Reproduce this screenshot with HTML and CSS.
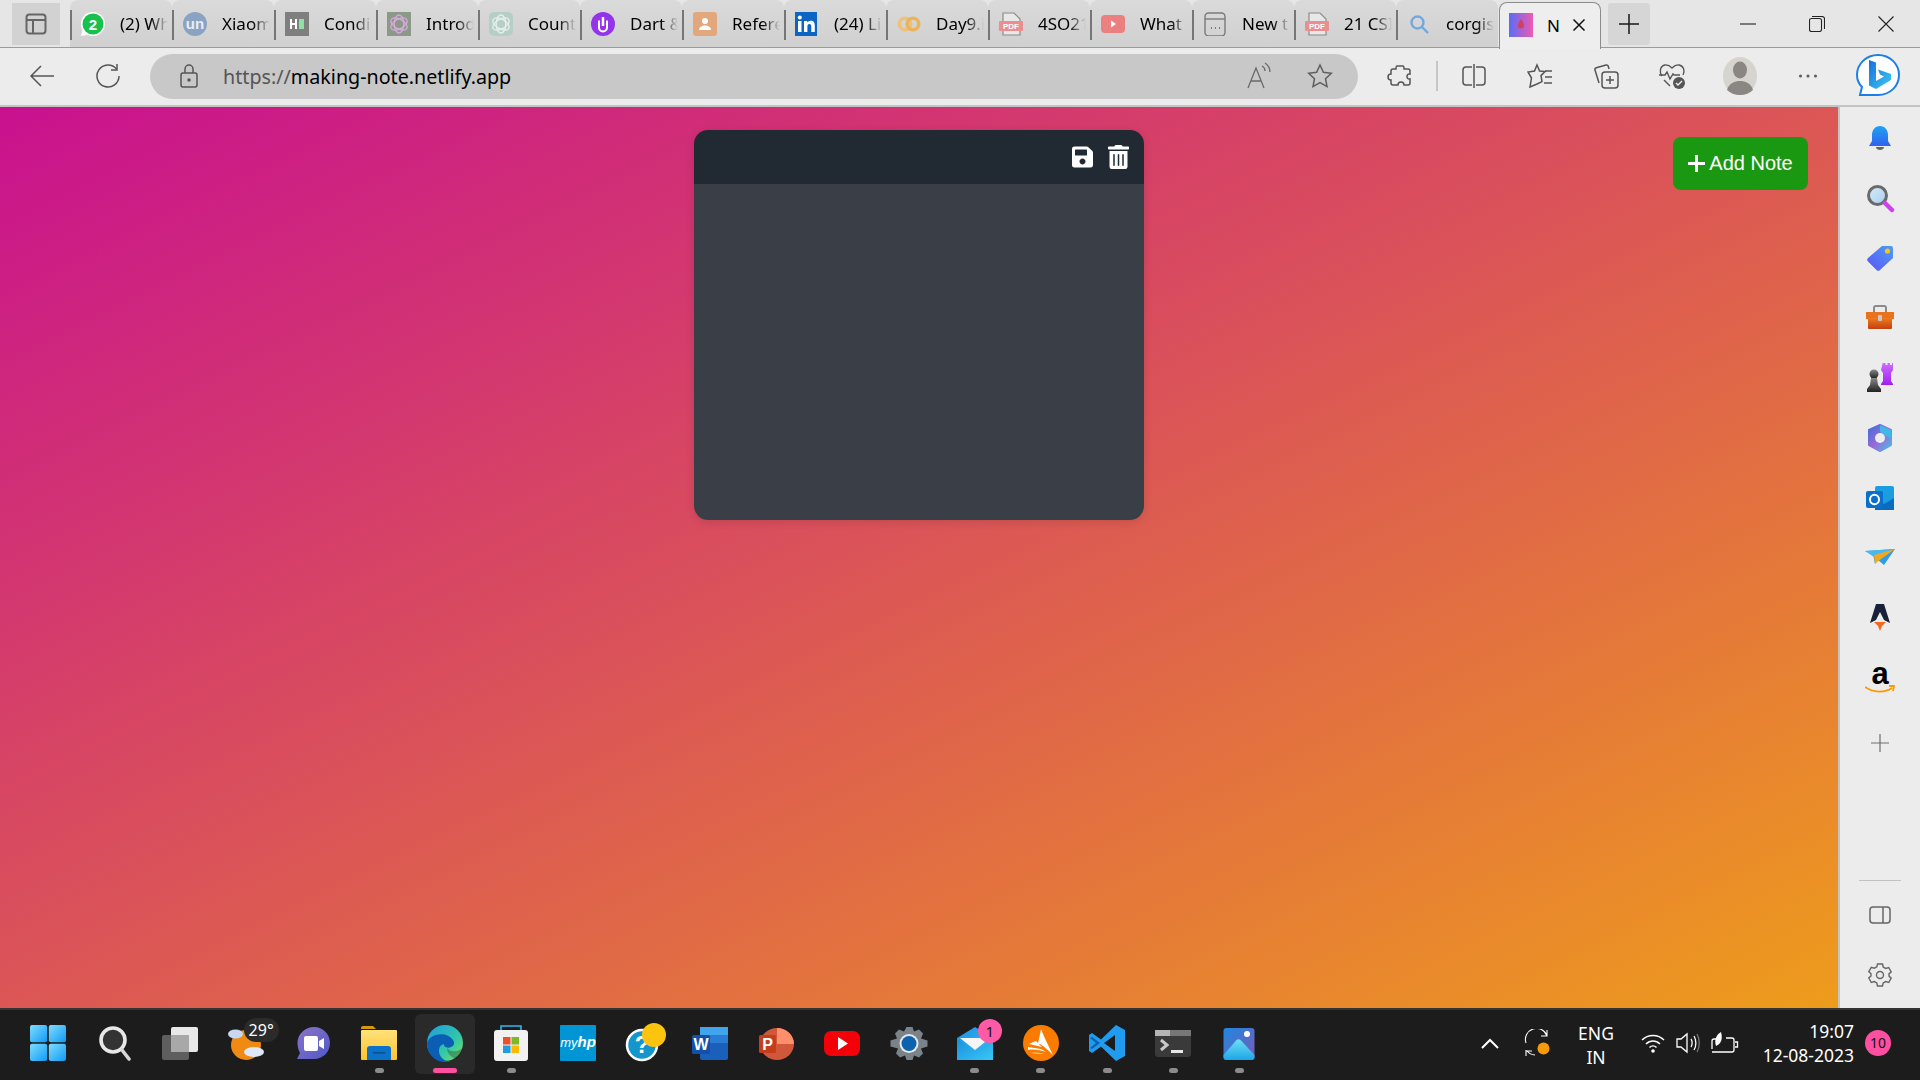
FILE: index.html
```html
<!DOCTYPE html>
<html lang="en">
<head>
<meta charset="utf-8">
<title>Making Note</title>
<link rel="stylesheet" href="styles.css">
</head>
<body>
<svg class="defs" width="0" height="0" aria-hidden="true">
  <defs>
    <linearGradient id="gWin" x1="0" y1="0" x2="1" y2="1"><stop offset="0" stop-color="#7fdcff"/><stop offset="1" stop-color="#0f9bf5"/></linearGradient>
    <linearGradient id="gBell" x1="0" y1="0" x2="0" y2="1"><stop offset="0" stop-color="#1fa2f0"/><stop offset="1" stop-color="#2f62f0"/></linearGradient>
    <linearGradient id="gTag" x1="1" y1="0" x2="0" y2="1"><stop offset="0" stop-color="#4e9cf5"/><stop offset="1" stop-color="#5a55f5"/></linearGradient>
    <linearGradient id="gBox" x1="0" y1="0" x2="0" y2="1"><stop offset="0" stop-color="#f07a1e"/><stop offset="1" stop-color="#c2410f"/></linearGradient>
    <linearGradient id="gLens" x1="0" y1="0" x2="1" y2="1"><stop offset="0" stop-color="#d8ecf8"/><stop offset="1" stop-color="#a5cdf0"/></linearGradient>
    <linearGradient id="gRook" x1="0" y1="0" x2="0" y2="1"><stop offset="0" stop-color="#d070ff"/><stop offset="1" stop-color="#a020f0"/></linearGradient>
    <linearGradient id="gPawn" x1="0" y1="0" x2="0" y2="1"><stop offset="0" stop-color="#888"/><stop offset="1" stop-color="#222"/></linearGradient>
    <linearGradient id="gM365" x1="0" y1="0" x2="1" y2="1"><stop offset="0" stop-color="#3a6fd8"/><stop offset=".5" stop-color="#9a6ad8"/><stop offset="1" stop-color="#45c0e8"/></linearGradient>
    <linearGradient id="gEdge" x1="0" y1="0" x2="1" y2="1"><stop offset="0" stop-color="#1b9de2"/><stop offset=".6" stop-color="#33c6a8"/><stop offset="1" stop-color="#7be35c"/></linearGradient>
    <linearGradient id="gFolder" x1="0" y1="0" x2="0" y2="1"><stop offset="0" stop-color="#ffe27a"/><stop offset="1" stop-color="#fdc22e"/></linearGradient>
    <linearGradient id="gChat" x1="0" y1="0" x2="1" y2="1"><stop offset="0" stop-color="#8c74c8"/><stop offset="1" stop-color="#5058c8"/></linearGradient>
    <linearGradient id="gMail" x1="0" y1="0" x2="1" y2="1"><stop offset="0" stop-color="#1a8ee0"/><stop offset="1" stop-color="#38c8f5"/></linearGradient>
    <linearGradient id="gPhoto" x1="0" y1="0" x2="1" y2="1"><stop offset="0" stop-color="#1e88e0"/><stop offset="1" stop-color="#7a5ab8"/></linearGradient>
    <linearGradient id="gPeak" x1="0" y1="0" x2="0" y2="1"><stop offset="0" stop-color="#6fe0f5"/><stop offset="1" stop-color="#1ea5e8"/></linearGradient>
    <linearGradient id="gTabN" x1="0" y1="0" x2="1" y2="0"><stop offset="0" stop-color="#5a6cf5"/><stop offset="1" stop-color="#f05ab0"/></linearGradient>
    <linearGradient id="gBing" x1="0" y1="0" x2="1" y2="1"><stop offset="0" stop-color="#1670e0"/><stop offset="1" stop-color="#3ec8f0"/></linearGradient>
  </defs>
</svg>

<header class="tabstrip">
  <button class="tab-panel-btn" type="button">
    <svg width="24" height="24" viewBox="0 0 24 24" fill="none" stroke="#666" stroke-width="2"><rect x="2.500" y="2.500" width="19" height="19" rx="3"/><path d="M2.500 8h19M9 8v13.500"/></svg>
  </button>
  <div class="tabs">
    <div class="tab"><svg class="fav" viewBox="0 0 24 24"><path d="M12 0a12 12 0 0 1 0 24c-2 0-3.800-.5-5.400-1.300L0 24l1.500-6A12 12 0 0 1 12 0z" fill="#fff"/><circle cx="12" cy="12" r="10.500" fill="#18c04c"/><text x="12" y="17.500" class="fav-num">2</text></svg><span class="tab-title">(2) Wh</span></div>
    <div class="tab"><svg class="fav" viewBox="0 0 24 24"><circle cx="12" cy="12" r="12" fill="#8ba3c2"/><text x="12" y="17" class="fav-un">un</text></svg><span class="tab-title">Xiaom</span></div>
    <div class="tab"><svg class="fav" viewBox="0 0 24 24"><rect width="24" height="24" fill="#7f7f7f"/><path d="M5 7h2v10H5zM10 7h2v10h-2zM7 11h3v2H7z" fill="#fff"/><rect x="14" y="7" width="5" height="10" fill="#8fe0a8"/></svg><span class="tab-title">Condi</span></div>
    <div class="tab"><svg class="fav" viewBox="0 0 24 24"><rect width="24" height="24" fill="#8b9a86"/><g fill="none" stroke="#d8a8e0" stroke-width="1.300"><ellipse cx="12" cy="12" rx="4.800" ry="9"/><ellipse cx="12" cy="12" rx="4.800" ry="9" transform="rotate(60 12 12)"/><ellipse cx="12" cy="12" rx="4.800" ry="9" transform="rotate(120 12 12)"/></g></svg><span class="tab-title">Introd</span></div>
    <div class="tab"><svg class="fav" viewBox="0 0 24 24"><rect width="24" height="24" rx="5" fill="#b5cfc6"/><g fill="none" stroke="#e6f0ec" stroke-width="1.300"><ellipse cx="12" cy="12" rx="4.800" ry="9"/><ellipse cx="12" cy="12" rx="4.800" ry="9" transform="rotate(60 12 12)"/><ellipse cx="12" cy="12" rx="4.800" ry="9" transform="rotate(120 12 12)"/></g></svg><span class="tab-title">Count</span></div>
    <div class="tab"><svg class="fav" viewBox="0 0 24 24"><circle cx="12" cy="12" r="12" fill="#9333ea"/><path d="M8 8.500v7a4 4 0 0 0 8 0v-7" fill="none" stroke="#fff" stroke-width="2"/><path d="M12 5v9" stroke="#fff" stroke-width="2.500"/></svg><span class="tab-title">Dart &amp;</span></div>
    <div class="tab"><svg class="fav" viewBox="0 0 24 24"><rect width="24" height="24" rx="3" fill="#e2a87c"/><circle cx="12" cy="9" r="3" fill="#fff"/><path d="M6 18c0-3 3-4.500 6-4.500s6 1.500 6 4.500z" fill="#fff"/></svg><span class="tab-title">Refere</span></div>
    <div class="tab"><svg class="fav" viewBox="0 0 24 24"><rect y="-1" width="22" height="26" rx="2" fill="#0a66c2"/><rect x="3" y="9" width="3.500" height="11" fill="#fff"/><circle cx="4.800" cy="5.500" r="2" fill="#fff"/><path d="M9 9h3.300v1.600c.7-1.100 1.900-1.900 3.500-1.900 3 0 4 2 4 5V20h-3.500v-5.500c0-1.500-.5-2.600-1.900-2.600s-2 1.100-2 2.600V20H9z" fill="#fff"/></svg><span class="tab-title">(24) Li</span></div>
    <div class="tab"><svg class="fav" viewBox="0 0 24 24" fill="none" stroke-width="3.600"><circle cx="8" cy="12" r="5.800" stroke="#efc27c"/><circle cx="16" cy="12" r="5.800" stroke="#e8b45c"/></svg><span class="tab-title">Day9.i</span></div>
    <div class="tab"><svg class="fav" viewBox="0 0 24 24"><path d="M4 1h11l6 6v16H4z" fill="#e8e8e8" stroke="#8a8a8a" stroke-width="1.200"/><rect y="9" width="24" height="10" rx="1" fill="#ea8f8f"/><text x="12" y="17" class="fav-pdf">PDF</text></svg><span class="tab-title">4SO21</span></div>
    <div class="tab"><svg class="fav" viewBox="0 0 24 24"><rect y="3" width="24" height="18" rx="4" fill="#ea8080"/><path d="M10 8.500l5 3.500-5 3.500z" fill="#fff"/></svg><span class="tab-title">What</span></div>
    <div class="tab"><svg class="fav" viewBox="0 0 24 24" fill="none" stroke="#7a7a7a" stroke-width="1.400"><rect x="2" y="1" width="20" height="23" rx="3.500"/><path d="M2 7h20"/><path d="M8 16h1M12 16h1M16 16h1" stroke-width="1.800"/></svg><span class="tab-title">New t</span></div>
    <div class="tab"><svg class="fav" viewBox="0 0 24 24"><path d="M4 1h11l6 6v16H4z" fill="#e8e8e8" stroke="#8a8a8a" stroke-width="1.200"/><rect y="9" width="24" height="10" rx="1" fill="#ea8f8f"/><text x="12" y="17" class="fav-pdf">PDF</text></svg><span class="tab-title">21 CSI</span></div>
    <div class="tab"><svg class="fav" viewBox="0 0 24 24" fill="none" stroke="#74a8dc" stroke-width="2.400"><circle cx="10.500" cy="10.500" r="6"/><path d="M15 15l6 6"/></svg><span class="tab-title">corgis</span></div>
    <div class="tab tab-active"><svg class="fav" viewBox="0 0 24 24"><rect width="24" height="24" fill="url(#gTabN)"/><path d="M12 6c2 3 3 4.500 3 6.500a3 3 0 0 1-6 0C9 10.500 10 9 12 6z" fill="#d04060"/></svg><span class="tab-title">N</span><svg class="tab-close" width="14" height="14" viewBox="0 0 14 14" stroke="#111" stroke-width="1.500"><path d="M1.500 1.500l11 11M12.500 1.500l-11 11"/></svg></div>
  </div>
  <button class="new-tab" type="button"><svg width="22" height="22" viewBox="0 0 22 22" stroke="#1a1a1a" stroke-width="1.500"><path d="M11 1v20M1 11h20"/></svg></button>
  <div class="winctl">
    <span class="winbtn"><svg width="16" height="16" viewBox="0 0 16 16" stroke="#222" stroke-width="1.100"><path d="M0 8h16"/></svg></span>
    <span class="winbtn"><svg width="16" height="16" viewBox="0 0 16 16" fill="none" stroke="#222" stroke-width="1.100"><rect x=".5" y="2.500" width="12" height="13" rx="2"/><path d="M3 .5h10a2.500 2.500 0 0 1 2.500 2.500v10"/></svg></span>
    <span class="winbtn"><svg width="16" height="16" viewBox="0 0 16 16" stroke="#222" stroke-width="1.100"><path d="M.5.500l15 15M15.500.500l-15 15"/></svg></span>
  </div>
</header>

<nav class="toolbar">
  <span class="slot"><svg width="26" height="26" viewBox="0 0 26 26" fill="none" stroke="#555" stroke-width="1.500"><path d="M25 13H2M12 3L2 13l10 10"/></svg></span>
  <span class="slot"><svg width="26" height="26" viewBox="0 0 26 26" fill="none" stroke="#555" stroke-width="1.500"><path d="M21.500 6A11 11 0 1 0 24 13"/><path d="M22 1v6h-6"/></svg></span>
  <div class="address">
    <svg class="lock" width="20" height="24" viewBox="0 0 20 24" fill="none" stroke="#555" stroke-width="1.500"><rect x="2" y="9" width="16" height="14" rx="2"/><path d="M6 9V5a4 4 0 0 1 8 0v4"/><circle cx="10" cy="16" r="1" fill="#555"/></svg>
    <span class="url"><span class="url-scheme">https://</span>making-note.netlify.app</span>
    <svg class="read" width="28" height="28" viewBox="0 0 28 28" fill="none" stroke="#6a6a6a" stroke-width="1.300"><path d="M2 26L10 6l8 20M5 19h10"/><path d="M16 4c2 1 3 3 3 5M19 1c3 2 5 5 5 9"/></svg>
    <svg class="star" width="26" height="26" viewBox="0 0 26 26" fill="none" stroke="#5f5f5f" stroke-width="1.500"><path d="M13 2l3.400 7.300 7.900 1-5.800 5.400 1.500 7.900L13 19.700l-7 3.900 1.500-7.900-5.800-5.400 7.900-1z"/></svg>
  </div>
  <span class="slot slot-after"><svg width="26" height="26" viewBox="0 0 26 26" fill="none" stroke="#555" stroke-width="1.500"><path d="M10 3h6c1 0 1 2 1 3h4c1 0 2 1 2 2v3c-4-1-4 6 0 5v4c0 1-1 2-2 2h-4c0-4-6-4-6 0H6c-1 0-2-1-2-2v-3c-4 0-4-6 0-6V8c0-1 1-2 2-2h3c0-1 0-3 1-3z"/></svg></span>
  <span class="tool-sep"></span>
  <span class="slot"><svg width="26" height="26" viewBox="0 0 26 26" fill="none" stroke="#555" stroke-width="1.500"><path d="M11 4H5a3 3 0 0 0-3 3v12a3 3 0 0 0 3 3h6M15 4h6a3 3 0 0 1 3 3v12a3 3 0 0 1-3 3h-6M13 1v24"/></svg></span>
  <span class="slot"><svg width="26" height="26" viewBox="0 0 26 26" fill="none" stroke="#555" stroke-width="1.500"><path d="M10 2l2.600 6 5.400.6-4 4 1 6L10 21l-7 3 1.500-9L1 9l6.500-1z"/><path d="M18 8h7M18 14h7M17 20h8"/></svg></span>
  <span class="slot"><svg width="26" height="26" viewBox="0 0 26 26" fill="none" stroke="#555" stroke-width="1.500"><path d="M6 20L2 7c-.3-1 .3-2 1.300-2.300L13 2c1-.2 2 .3 2.300 1.300L16 6"/><rect x="9" y="9" width="16" height="16" rx="3"/><path d="M17 13v8M13 17h8"/></svg></span>
  <span class="slot"><svg width="28" height="28" viewBox="0 0 28 28" fill="none" stroke="#555" stroke-width="1.400"><path d="M4 14C1 10 2 4 7 3c3-.5 5 1 7 3 2-2 4-3.500 7-3 5 1 6 6 4 10"/><path d="M1 13h6l2-3 3 7 3-5 1 1h6"/><path d="M6 18l6 6"/><circle cx="21" cy="21" r="6" fill="#555" stroke="none"/><path d="M18 21l2 2 4-4" stroke="#eee"/></svg></span>
  <span class="slot slot-p"><span class="avatar"><svg width="34" height="38" viewBox="0 0 34 38"><ellipse cx="17" cy="19" rx="17" ry="19" fill="#d6d4cf"/><ellipse cx="17" cy="13" rx="7" ry="8.500" fill="#8a8681"/><path d="M4 33c2-7 8-9 13-9s11 2 13 9c-3 3-8 5-13 5S7 36 4 33z" fill="#8a8681"/></svg></span></span>
  <span class="slot slot-p"><svg width="20" height="6" viewBox="0 0 20 6" fill="#5a5a5a"><circle cx="2.500" cy="3" r="1.500"/><circle cx="10" cy="3" r="1.500"/><circle cx="17.500" cy="3" r="1.500"/></svg></span>
  <span class="slot slot-b"><svg width="46" height="46" viewBox="0 0 46 46"><path d="M23 2c12 0 21 9 21 20s-9 20-21 20H5l2-8C4 31 2 27 2 22 2 11 11 2 23 2z" fill="#fff" stroke="#1c7fe8" stroke-width="2"/><path d="M14 7l7 2.500V28l8-4.500-4-2-2-5 13 4.500v6l-15 9-7-3.500z" fill="url(#gBing)"/></svg></span>
</nav>

<div class="workspace">
  <main class="page">
    <article class="note">
      <div class="note-head">
        <svg class="note-icon" width="21" height="24" viewBox="0 0 448 512" fill="#fff"><path d="M433.941 129.941l-83.882-83.882A48 48 0 0 0 316.118 32H48C21.490 32 0 53.490 0 80v352c0 26.510 21.490 48 48 48h352c26.510 0 48-21.490 48-48V163.882a48 48 0 0 0-14.059-33.941zM224 416c-35.346 0-64-28.654-64-64 0-35.346 28.654-64 64-64s64 28.654 64 64c0 35.346-28.654 64-64 64zm96-304.520V212c0 6.627-5.373 12-12 12H76c-6.627 0-12-5.373-12-12V108c0-6.627 5.373-12 12-12h228.520c3.183 0 6.235 1.264 8.485 3.515l3.480 3.480A11.996 11.996 0 0 1 320 111.480z"/></svg>
        <svg class="note-icon" width="21" height="24" viewBox="0 0 448 512" fill="#fff"><path d="M32 464a48 48 0 0 0 48 48h288a48 48 0 0 0 48-48V128H32zm272-256a16 16 0 0 1 32 0v224a16 16 0 0 1-32 0zm-96 0a16 16 0 0 1 32 0v224a16 16 0 0 1-32 0zm-96 0a16 16 0 0 1 32 0v224a16 16 0 0 1-32 0zM432 32H312l-9.400-18.700A24 24 0 0 0 281.100 0H166.800a23.720 23.720 0 0 0-21.400 13.300L136 32H16A16 16 0 0 0 0 48v32a16 16 0 0 0 16 16h416a16 16 0 0 0 16-16V48a16 16 0 0 0-16-16z"/></svg>
      </div>
      <div class="note-body"></div>
    </article>
    <button class="add-note" type="button"><svg width="17" height="17" viewBox="0 0 17 17" fill="#fff"><path d="M7 0h3v7h7v3h-7v7H7v-7H0V7h7z"/></svg>Add Note</button>
  </main>

  <aside class="sidebar">
    <span class="side-item"><svg width="30" height="30" viewBox="0 0 30 30"><path d="M15 3c5 0 8 4 8 9v6l3 5H4l3-5v-6c0-5 3-9 8-9z" fill="url(#gBell)"/><path d="M11 24h8c0 2-2 3-4 3s-4-1-4-3z" fill="#666"/></svg></span>
    <span class="side-item"><svg width="30" height="30" viewBox="0 0 30 30"><circle cx="12.500" cy="12.500" r="9" fill="url(#gLens)" stroke="#6a6a6a" stroke-width="3"/><path d="M20 20l7 7" stroke="#d040f0" stroke-width="4.500" stroke-linecap="round"/></svg></span>
    <span class="side-item"><svg width="30" height="30" viewBox="0 0 30 30"><path d="M17 3h9a2 2 0 0 1 2 2v10L15 27a2.500 2.500 0 0 1-3.500 0L3 18.500a2.500 2.500 0 0 1 0-3.500z" fill="url(#gTag)"/><circle cx="22.500" cy="8" r="2.600" fill="#f5c518"/></svg></span>
    <span class="side-item"><svg width="30" height="30" viewBox="0 0 30 30"><path d="M9 9V5a2 2 0 0 1 2-2h8a2 2 0 0 1 2 2v4" fill="none" stroke="#8a8a8a" stroke-width="2"/><path d="M1 9h28v7H1z" fill="#e8721e"/><path d="M3 15h24v10a1 1 0 0 1-1 1H4a1 1 0 0 1-1-1z" fill="url(#gBox)"/><rect x="13" y="12" width="4" height="6" rx="1" fill="#c8c8c8"/></svg></span>
    <span class="side-item"><svg width="30" height="30" viewBox="0 0 30 30"><path d="M19 0h2.500v3h2V0H26v3h2V0h1v8l-2 3v8l2 3v1H17v-1l2-3v-8l-2-3z" fill="url(#gRook)" transform="translate(-1 -1)"/><circle cx="9" cy="11" r="4.500" fill="url(#gPawn)"/><path d="M6 15h6l1 7 3 4v3H2v-3l3-4z" fill="url(#gPawn)"/></svg></span>
    <span class="side-item"><svg width="30" height="30" viewBox="0 0 30 30"><path d="M15 2l11 5v15l-11 6-11-6V7z" fill="url(#gM365)" stroke="url(#gM365)" stroke-width="2" stroke-linejoin="round"/><path d="M15 2l11 5v8l-7-3-4-3z" fill="#3fb8e8"/><circle cx="15" cy="15" r="5" fill="#ededed"/></svg></span>
    <span class="side-item"><svg width="30" height="30" viewBox="0 0 30 30"><rect x="10" y="3" width="19" height="24" rx="2" fill="#1b9de2"/><path d="M10 15l9 6 10-6v12H10z" fill="#0a6cc0"/><rect x="1" y="8" width="17" height="17" rx="2" fill="#0a70cc"/><ellipse cx="9.500" cy="16.500" rx="4.500" ry="4.800" fill="none" stroke="#fff" stroke-width="2"/></svg></span>
    <span class="side-item"><svg width="30" height="30" viewBox="0 0 30 30"><path d="M0 8l30-2-11 16-6-5-3 4-2-10z" fill="#2f9ce8"/><path d="M0 8l30-2L9 14z" fill="#48b8f0"/><path d="M9 12L30 6 12 19l-2 2z" fill="#f0a820"/></svg></span>
    <span class="side-item"><svg width="30" height="30" viewBox="0 0 30 30"><path d="M11 1h8l6 19-6-3-4-8-4 8-6 3z" fill="#17223a"/><path d="M9 19h12l-4 4-2 5-2-5z" fill="#f26a1a"/></svg></span>
    <span class="side-item"><span class="amazon"><span class="amazon-a">a</span><svg class="amazon-smile" width="30" height="9" viewBox="0 0 30 9" fill="none" stroke="#f90" stroke-width="1.800"><path d="M0 2c8 6 20 6 27 1"/><path d="M24 1h5l-1 5"/></svg></span></span>
    <span class="side-item side-add"><svg width="20" height="20" viewBox="0 0 20 20" stroke="#6e6e6e" stroke-width="1.200"><path d="M10 1v18M1 10h18"/></svg></span>
    <div class="side-bottom">
      <span class="side-rule"></span>
      <span class="side-item"><svg width="22" height="18" viewBox="0 0 22 18" fill="none" stroke="#666" stroke-width="1.500"><rect x="1" y="1" width="20" height="16" rx="3"/><path d="M14 1v16"/></svg></span>
      <span class="side-item"><svg width="26" height="26" viewBox="0 0 26 26" fill="none" stroke="#666" stroke-width="1.400"><circle cx="13" cy="13" r="3.500"/><path d="M10.500 2h5l.7 3 2.500 1.400 3-.9 2.500 4.300-2.200 2.100v2.200l2.200 2.100-2.500 4.300-3-.9-2.500 1.400-.7 3h-5l-.7-3-2.500-1.400-3 .9L1.800 16l2.200-2.100v-2.200L1.800 9.600l2.500-4.300 3 .9L9.800 4.800z"/></svg></span>
    </div>
  </aside>
</div>

<footer class="taskbar">
  <div class="apps">
    <div class="app"><svg viewBox="0 0 36 36"><rect width="17.200" height="17.200" rx="2" fill="url(#gWin)"/><rect x="18.800" width="17.200" height="17.200" rx="2" fill="url(#gWin)"/><rect y="18.800" width="17.200" height="17.200" rx="2" fill="url(#gWin)"/><rect x="18.800" y="18.800" width="17.200" height="17.200" rx="2" fill="url(#gWin)"/></svg></div>
    <div class="app"><svg viewBox="0 0 36 36" fill="none"><circle cx="17" cy="15" r="12" fill="#333" stroke="#e8e8e8" stroke-width="3.600"/><path d="M26 25l7 9" stroke="#d8d8d8" stroke-width="3.600" stroke-linecap="round"/></svg></div>
    <div class="app"><svg viewBox="0 0 36 36"><rect x="0" y="10" width="27" height="25" rx="2" fill="#5e5e5e"/><rect x="9" y="2" width="27" height="25" rx="2" fill="#e8e8e8"/><rect x="9" y="10" width="18" height="17" fill="#a8a8a8"/></svg></div>
    <div class="app app-weather"><svg viewBox="0 0 36 36"><circle cx="17" cy="20" r="15" fill="#f08a12"/><ellipse cx="6.500" cy="9" rx="7.500" ry="4.500" fill="#c8d8f0"/><ellipse cx="25" cy="27" rx="10" ry="5" fill="#dfe8f8"/></svg><span class="temp">29°</span></div>
    <div class="app"><svg viewBox="0 0 36 36"><path d="M19 2c9 0 16 7 16 16s-7 16-16 16H2l3-6c-1.500-3-2.500-6-2.500-10C2.500 9 10 2 19 2z" fill="url(#gChat)"/><rect x="9" y="11" width="14" height="15" rx="2" fill="#fff"/><path d="M24 16l5-3v11l-5-3z" fill="#fff"/></svg></div>
    <div class="app app-dot"><svg viewBox="0 0 36 36"><path d="M0 2a2 2 0 0 1 2-2h10l3 3h-15z" fill="#d59a0c" transform="translate(0 1)"/><rect y="5" width="36" height="30" rx="1" fill="url(#gFolder)"/><path d="M6 24a3 3 0 0 1 3-3h18a3 3 0 0 1 3 3v11H6z" fill="#0a72c8"/><rect x="12" y="27" width="12" height="1.600" fill="#0a4f90"/></svg></div>
    <div class="app app-active"><svg viewBox="0 0 36 36"><circle cx="18" cy="18" r="18" fill="url(#gEdge)"/><path d="M0 18C3 8 20 6 26 15c2 3 1 6-2 7-4 2-8-1-7-3-6 1-7 10-1 15 2 2 5 2 8 2A18 18 0 0 1 0 18z" fill="#0a5fb4"/><path d="M36 22c-2 3-6 5-11 4-2 0-4-2-5-3 0 6 5 11 10 10 3-2 5-6 6-11z" fill="#1c1c1c" opacity=".3"/></svg></div>
    <div class="app app-dot"><svg viewBox="0 0 36 36"><path d="M8 5V1h20v4" fill="none" stroke="#2db6f5" stroke-width="1.600"/><rect x="1" y="5" width="34" height="31" rx="3" fill="#f2f2f2"/><rect x="10" y="12" width="7.500" height="7.500" fill="#e8512a"/><rect x="18.500" y="12" width="7.500" height="7.500" fill="#7db828"/><rect x="10" y="20.500" width="7.500" height="7.500" fill="#1c9ee0"/><rect x="18.500" y="20.500" width="7.500" height="7.500" fill="#fdb900"/></svg></div>
    <div class="app"><svg viewBox="0 0 36 36"><rect width="36" height="36" rx="1" fill="#0096d6"/><text x="18" y="22" class="myhp">my<tspan class="myhp-b">hp</tspan></text></svg></div>
    <div class="app"><svg viewBox="0 0 36 36"><circle cx="16" cy="20" r="15" fill="#1296cc" stroke="#fff" stroke-width="2.500"/><text x="16" y="28" class="help-q">?</text><circle cx="28" cy="10" r="12" fill="#fcc30f"/></svg></div>
    <div class="app"><svg viewBox="0 0 36 36"><rect x="8" y="2" width="28" height="33" rx="2" fill="#1a5fbc"/><rect x="8" y="2" width="28" height="8" fill="#41a5ee"/><rect x="8" y="10" width="28" height="8" fill="#2b7cd3"/><rect x="0" y="10" width="18" height="19" rx="1.500" fill="#1450a8"/><text x="9" y="25" class="office-l">W</text></svg></div>
    <div class="app"><svg viewBox="0 0 36 36"><ellipse cx="19" cy="19" rx="17" ry="16" fill="#d0573a"/><path d="M19 3a17 16 0 0 1 17 16H19z" fill="#ff8f6b"/><rect x="1" y="10" width="17" height="18" rx="1.500" fill="#c43e1c"/><text x="9.500" y="25" class="office-l">P</text></svg></div>
    <div class="app"><svg viewBox="0 0 36 36"><rect y="6" width="36" height="25" rx="7" fill="#f40009"/><path d="M14 12l10 6.500L14 25z" fill="#fff"/></svg></div>
    <div class="app"><svg viewBox="0 0 36 36"><path d="M15 2h6l1.500 4.500 5-2 4 4-2 5 6.500 2v6l-6.500 2 2 5-4 4-5-2L21 35h-6l-1.500-4.500-5 2-4-4 2-5L-1 21.500v-6l6.500-2-2-5 4-4 5 2z" fill="#7a828a" transform="translate(.5 0)"/><circle cx="18" cy="18.500" r="9.500" fill="#e8e8e8"/><circle cx="18" cy="18.500" r="7.500" fill="#0d62b0"/></svg></div>
    <div class="app app-dot app-badged"><svg viewBox="0 0 36 36"><path d="M0 13L18 2l18 11v22H0z" fill="url(#gMail)"/><path d="M3 13h30l-15 12z" fill="#f5f5f5"/><path d="M0 14l18 12 18-12v21H0z" fill="url(#gMail)"/></svg><span class="count-1">1</span></div>
    <div class="app app-dot"><svg viewBox="0 0 36 36"><ellipse cx="18" cy="18" rx="18" ry="18" fill="#f97c00"/><path d="M18 4c3 8 7 16 12 26-5-5-10-10-15-12 1-4 2-9 3-14zM13 16c-3 1-5 2-7 3l13 3zM5 22l13 2 5 3c-6-2-12-3-18-2zM8 28c5-.5 9 0 13 1z" fill="#fff"/></svg></div>
    <div class="app app-dot"><svg viewBox="0 0 36 36"><path d="M26 0l9 5v26l-9 5-15-14.500L2 28l-3-2v-16l3-2 9 6.500z" fill="#1f9cf0" transform="translate(1 0)"/><path d="M26 10L15 18l11 8z" fill="#1c1c1c"/><path d="M11 18L3 12l-2 1 6 5-6 5 2 1z" fill="#0a62b0"/></svg></div>
    <div class="app app-dot"><svg viewBox="0 0 36 36"><rect y="5" width="36" height="27" rx="3" fill="#3a3a3a"/><rect y="5" width="15" height="6" fill="#b5b5b5"/><rect x="15" y="5" width="21" height="6" fill="#777"/><path d="M6 15l6 5-6 5" fill="none" stroke="#c8c8c8" stroke-width="3"/><rect x="16" y="25" width="12" height="3" fill="#e8e8e8"/></svg></div>
    <div class="app app-dot"><svg viewBox="0 0 36 36"><rect x="2.500" y="3" width="31" height="32" rx="3" fill="url(#gPhoto)"/><circle cx="26" cy="9" r="3" fill="#fff"/><path d="M2.500 30l13-15c1-1 3-1 4 0l14 15v2a3 3 0 0 1-3 3h-25a3 3 0 0 1-3-3z" fill="url(#gPeak)"/></svg></div>
  </div>
  <div class="tray">
    <svg class="t-chev" width="18" height="11" viewBox="0 0 18 11" fill="none" stroke="#fff" stroke-width="2"><path d="M1 10l8-8 8 8"/></svg>
    <span class="t-sync"><svg width="28" height="28" viewBox="0 0 28 28" fill="none" stroke="#fff" stroke-width="1.100"><path d="M2 14A11 11 0 0 1 23 7M23 1v6h-6M2 22h6M2 21v6M3 22a11 11 0 0 0 8 4"/><circle cx="19.500" cy="19.500" r="6" fill="#f59a0c" stroke="none"/></svg></span>
    <div class="t-lang"><span>ENG</span><span>IN</span></div>
    <svg class="t-wifi" width="24" height="20" viewBox="0 0 24 20" fill="none" stroke="#fff" stroke-width="1.500"><path d="M1 7c6-6 16-6 22 0M5 11c4-4 10-4 14 0M8.500 14.500c2-2 5-2 7 0"/><circle cx="12" cy="18" r="1.800" fill="#fff" stroke="none"/></svg>
    <svg class="t-vol" width="24" height="22" viewBox="0 0 24 22" fill="none" stroke="#fff" stroke-width="1.300"><path d="M1 7h4l6-5v18l-6-5H1z"/><path d="M15 7c1.500 2 1.500 6 0 8M18 4c2.500 4 2.500 10 0 14"/><path d="M21 2c3 5 3 13 0 18" stroke="#777"/></svg>
    <svg class="t-bat" width="28" height="24" viewBox="0 0 28 24" fill="none" stroke="#fff" stroke-width="1.300"><path d="M7 8H3a2 2 0 0 0-2 2v8M1 21h20a2 2 0 0 0 2-2V9a2 2 0 0 0-2-2h-6"/><path d="M24 11h2.500v5H24"/><path d="M10 1c-5 3-7 8-5 14 5-2 7-7 5-14z" fill="#fff" stroke="none"/></svg>
    <div class="t-clock"><span>19:07</span><span>12-08-2023</span></div>
    <span class="t-badge">10</span>
  </div>
</footer>
</body>
</html>
```

FILE: styles.css
```css
* { box-sizing: border-box; }
html, body { margin: 0; padding: 0; }
body {
  width: 1920px;
  height: 1080px;
  overflow: hidden;
  display: flex;
  flex-direction: column;
  font-family: "Noto Sans", "Open Sans", sans-serif;
  background: #ececec;
}
button { border: 0; padding: 0; font: inherit; }
.defs { position: absolute; }

/* tab strip */
.tabstrip {
  height: 48px;
  display: flex;
  align-items: flex-start;
  background: #e6e6e6;
  border-bottom: 1px solid #9b9b9b;
  flex: none;
}
.tab-panel-btn {
  width: 48px; height: 42px;
  margin: 3px 10px 0 12px;
  background: #d2d2d2;
  display: flex; align-items: center; justify-content: center;
}
.tabs { display: flex; height: 47px; }
.tab {
  position: relative;
  width: 102px; height: 47px;
  display: flex; align-items: center;
  padding-left: 11px;
  background: linear-gradient(#dadada, #d0d0d0);
  border-radius: 8px 8px 0 0;
  color: #000;
  font-size: 17px;
}
.tab::before {
  content: "";
  position: absolute; left: 0; top: 10px;
  width: 2px; height: 30px;
  background: #767676;
}
.tab-active::before { display: none; }
.fav { width: 24px; height: 24px; flex: none; }
.fav-num { font: 700 15px "Liberation Sans", sans-serif; fill: #fff; text-anchor: middle; }
.fav-un { font: 700 15px "Liberation Sans", sans-serif; fill: #e8eef6; text-anchor: middle; }
.fav-pdf { font: 700 8px "Liberation Sans", sans-serif; fill: #fff; text-anchor: middle; }
.tab-title {
  margin-left: 15px;
  width: 51px;
  white-space: nowrap;
  overflow: hidden;
  -webkit-mask-image: linear-gradient(to right, #000 60%, transparent 94%);
  mask-image: linear-gradient(to right, #000 60%, transparent 94%);
}
.tab-active {
  margin-left: 1px;
  width: 102px; height: 47px;
  margin-top: 2px;
  padding: 0 0 2px 9px;
  background: #eeeeee;
  border: 1px solid #8c8c8c;
  border-bottom: 0;
  border-radius: 8px 8px 0 0;
  z-index: 1;
}
.tab-active .tab-title { margin-left: 14px; width: 13px; -webkit-mask-image: none; mask-image: none; }
.tab-close { margin-left: 12px; flex: none; }
.new-tab {
  width: 42px; height: 42px;
  margin: 3px 0 0 7px;
  background: #d6d6d6;
  border-radius: 3px;
  display: flex; align-items: center; justify-content: center;
}
.winctl { margin-left: auto; display: flex; height: 47px; }
.winbtn { width: 69px; display: flex; align-items: center; justify-content: center; }

/* toolbar */
.toolbar {
  height: 59px;
  flex: none;
  display: flex;
  align-items: center;
  padding: 0 0 1px 9px;
  background: #ececec;
  border-bottom: 2px solid #c4c4c4;
}
.slot { width: 66px; height: 46px; display: flex; align-items: center; justify-content: center; flex: none; }
.slot-after { margin-left: 9px; }
.slot-p { margin-left: 2px; }
.slot-b { margin-left: 4px; }
.avatar { display: flex; }
.address {
  width: 1208px; height: 45px;
  margin-left: 9px;
  display: flex; align-items: center;
  padding: 0 25px 0 29px;
  background: #c8c8c8;
  border-radius: 23px;
  flex: none;
}
.url { margin-left: 24px; font-size: 19.700px; color: #000; white-space: nowrap; }
.url-scheme { color: #555; }
.read { margin-left: auto; }
.star { margin-left: 33px; }
.tool-sep { width: 2px; height: 30px; margin: 0 3px; background: #c6c6c6; flex: none; }

/* page */
.workspace { flex: 1; min-height: 0; display: flex; }
.page {
  flex: 1;
  display: grid;
  grid-template-columns: 1fr 450px 1fr;
  align-items: start;
  padding-top: 23px;
  background: linear-gradient(to bottom right, #c9118f, #ee9c1c);
}
.note {
  grid-column: 2;
  height: 390px;
  border-radius: 14px;
  overflow: hidden;
  display: flex; flex-direction: column;
  box-shadow: 0 2px 10px rgba(0, 0, 0, .12);
}
.note-head {
  height: 54px;
  display: flex; align-items: center; justify-content: flex-end;
  gap: 15px;
  padding-right: 15px;
  background: #212932;
}
.note-body { flex: 1; background: #3a3f47; }
.add-note {
  grid-column: 3;
  justify-self: end;
  margin: 7px 30px 0 0;
  width: 135px; height: 53px;
  display: flex; align-items: center; justify-content: center; gap: 4px;
  background: #1a9812;
  color: #fff;
  border-radius: 8px;
  font: 20px "Liberation Sans", sans-serif;
}

/* edge sidebar */
.sidebar {
  width: 82px;
  flex: none;
  display: flex; flex-direction: column; align-items: center;
  padding-top: 1px;
  background: #ececec;
  border-left: 2px solid #c4c4c4;
}
.side-item { height: 60px; flex: none; display: flex; align-items: center; justify-content: center; width: 100%; }
.side-add { margin-top: 5px; }
.side-bottom { margin-top: auto; width: 100%; display: flex; flex-direction: column; align-items: center; padding-bottom: 3px; }
.side-rule { width: 42px; height: 1px; background: #c2c2c2; margin-bottom: 4px; }
.amazon { display: flex; flex-direction: column; align-items: center; }
.amazon-a { font: 700 31px/22px "Liberation Sans", sans-serif; color: #000; }
.amazon-smile { display: block; }

/* taskbar */
.taskbar {
  height: 72px;
  flex: none;
  display: flex;
  background: #1c1c1c;
  border-top: 2px solid #333;
  color: #fff;
}
.apps { display: flex; padding-left: 15px; align-items: flex-start; }
.app {
  position: relative;
  width: 60px; height: 60px;
  margin: 4px 3.100px 0;
  padding-top: 11px;
  display: flex; flex-direction: column; align-items: center;
  border-radius: 6px;
  flex: none;
}
.app svg { width: 36px; height: 36px; flex: none; overflow: visible; }
.app-dot::after, .app-active::after {
  content: "";
  width: 9px; height: 5px;
  margin-top: 7px;
  border-radius: 3px;
  background: #8b8b8b;
}
.app-active { background: #2a2a2a; }
.app-active::after { width: 24px; background: #ff4fa0; }
.temp {
  position: absolute; left: 27px; top: 4px;
  width: 35px; height: 24px;
  border-radius: 12px;
  background: #2b2b2b;
  font-size: 16px; line-height: 24px; text-align: center;
}
.count-1 {
  position: absolute; left: 33px; top: 5px;
  width: 24px; height: 24px;
  border-radius: 50%;
  background: #ff5aa5;
  color: #111;
  font-size: 15px; line-height: 24px; text-align: center;
}
.myhp { font: italic 13px "Liberation Sans", sans-serif; fill: #fff; text-anchor: middle; }
.myhp-b { font-weight: 700; font-size: 15px; }
.help-q { font: 700 24px "Liberation Sans", sans-serif; fill: #fff; text-anchor: middle; }
.office-l { font: 700 16px "Liberation Sans", sans-serif; fill: #fff; text-anchor: middle; }

.tray { margin-left: auto; display: flex; align-items: center; height: 66px; padding-right: 29px; }
.t-sync { margin-left: 25px; display: flex; }
.t-lang {
  margin: 4px 0 0 19px; width: 50px;
  display: flex; flex-direction: column; align-items: center;
  font-size: 17.500px; line-height: 24px;
}
.t-wifi { margin-left: 20px; }
.t-vol { margin-left: 11px; }
.t-bat { margin-left: 11px; }
.t-clock {
  margin-left: 15px; width: 100px;
  display: flex; flex-direction: column; align-items: flex-end;
  font-size: 17.500px; line-height: 24px;
}
.t-badge {
  margin-left: 11px;
  width: 26px; height: 26px;
  border-radius: 50%;
  background: #ff4fa0;
  color: #111;
  font-size: 14px; line-height: 26px; text-align: center;
}
```
